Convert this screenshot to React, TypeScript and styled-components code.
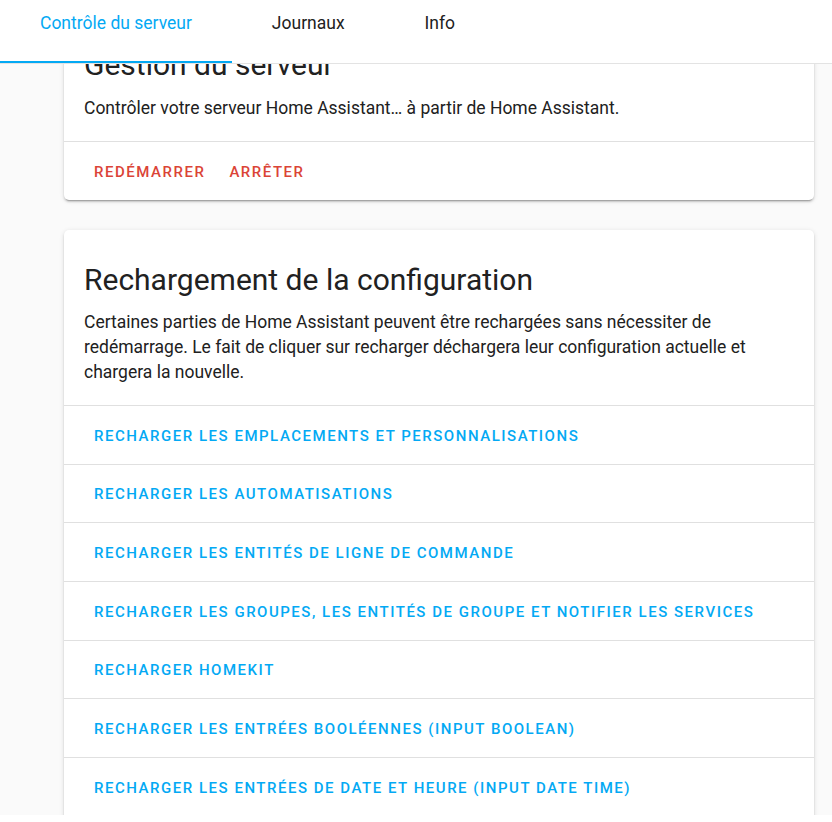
import React from 'react';
import styled, { createGlobalStyle } from 'styled-components';

const GlobalStyle = createGlobalStyle`
  html, body {
    margin: 0;
    padding: 0;
    overflow: hidden;
    background: #ffffff;
    font-family: Roboto, "Noto Sans", "Liberation Sans", sans-serif;
    color: #212121;
  }
`;

const Viewport = styled.div`
  height: 815px;
  overflow: hidden;
  background: #fafafa;
`;

const Header = styled.header`
  position: fixed;
  top: 0;
  left: 0;
  right: 0;
  z-index: 2;
  height: 64px;
  box-sizing: border-box;
  background: #ffffff;
  border-bottom: 1px solid #e3e3e3;
  display: flex;
`;

const Tab = styled.div<{ $active?: boolean }>`
  height: 63px;
  box-sizing: border-box;
  padding: 1px 40px 0;
  font-size: 17.5px;
  line-height: 44px;
  white-space: nowrap;
  color: ${(p) => (p.$active ? '#03a9f4' : '#212121')};
  border-bottom: 2px solid ${(p) => (p.$active ? '#03a9f4' : 'transparent')};
  cursor: pointer;
`;

const Main = styled.main`
  padding: 15px 0 40px 64px;
  display: flex;
  flex-direction: column;
  gap: 30px;
`;

const Card = styled.section<{ $tail?: number }>`
  width: 750px;
  padding-bottom: ${(p) => p.$tail ?? 0}px;
  background: #ffffff;
  border-radius: 5px;
  box-shadow: 0 2px 2px 0 rgba(0, 0, 0, 0.14), 0 1px 5px 0 rgba(0, 0, 0, 0.12),
    0 3px 1px -2px rgba(0, 0, 0, 0.2);
`;

const CardTitle = styled.h1`
  margin: 0;
  padding: 30px 20px 0;
  font-size: 30px;
  line-height: 40px;
  font-weight: 400;
  color: #212121;
`;

const CardText = styled.p`
  margin: 10.5px 0 0;
  padding: 0 20px 20px;
  font-size: 17.5px;
  line-height: 25px;
  color: #212121;
`;

const Actions = styled.div`
  display: flex;
  gap: 4px;
  padding: 11px 20px;
  border-top: 1px solid #e0e0e0;
`;

const Row = styled.div`
  display: flex;
  padding: 10.83px 20px;
  border-top: 1px solid #e0e0e0;
`;

const TextButton = styled.button<{ $danger?: boolean }>`
  height: 36px;
  padding: 2px 10px 0;
  border: none;
  background: transparent;
  font-family: Roboto, "Liberation Sans", sans-serif;
  font-size: 15px;
  font-weight: 500;
  letter-spacing: 1.52px;
  color: ${(p) => (p.$danger ? '#db4437' : '#03a9f4')};
  cursor: pointer;
  white-space: nowrap;
`;

const reloadActions = [
  'RECHARGER LES EMPLACEMENTS ET PERSONNALISATIONS',
  'RECHARGER LES AUTOMATISATIONS',
  'RECHARGER LES ENTITÉS DE LIGNE DE COMMANDE',
  'RECHARGER LES GROUPES, LES ENTITÉS DE GROUPE ET NOTIFIER LES SERVICES',
  'RECHARGER HOMEKIT',
  'RECHARGER LES ENTRÉES BOOLÉENNES (INPUT BOOLEAN)',
  'RECHARGER LES ENTRÉES DE DATE ET HEURE (INPUT DATE TIME)',
];

function App(): JSX.Element {
  return (
    <Viewport>
      <GlobalStyle />
      <Header>
        <Tab $active>Contrôle du serveur</Tab>
        <Tab>Journaux</Tab>
        <Tab>Info</Tab>
      </Header>
      <Main>
        <Card>
          <CardTitle>Gestion du serveur</CardTitle>
          <CardText>Contrôler votre serveur Home Assistant… à partir de Home Assistant.</CardText>
          <Actions>
            <TextButton $danger>REDÉMARRER</TextButton>
            <TextButton $danger>ARRÊTER</TextButton>
          </Actions>
        </Card>
        <Card $tail={40}>
          <CardTitle>Rechargement de la configuration</CardTitle>
          <CardText>
            Certaines parties de Home Assistant peuvent être rechargées sans nécessiter de
            redémarrage. Le fait de cliquer sur recharger déchargera leur configuration actuelle et
            chargera la nouvelle.
          </CardText>
          {reloadActions.map((label) => (
            <Row key={label}>
              <TextButton>{label}</TextButton>
            </Row>
          ))}
        </Card>
      </Main>
    </Viewport>
  );
}

export default App;
